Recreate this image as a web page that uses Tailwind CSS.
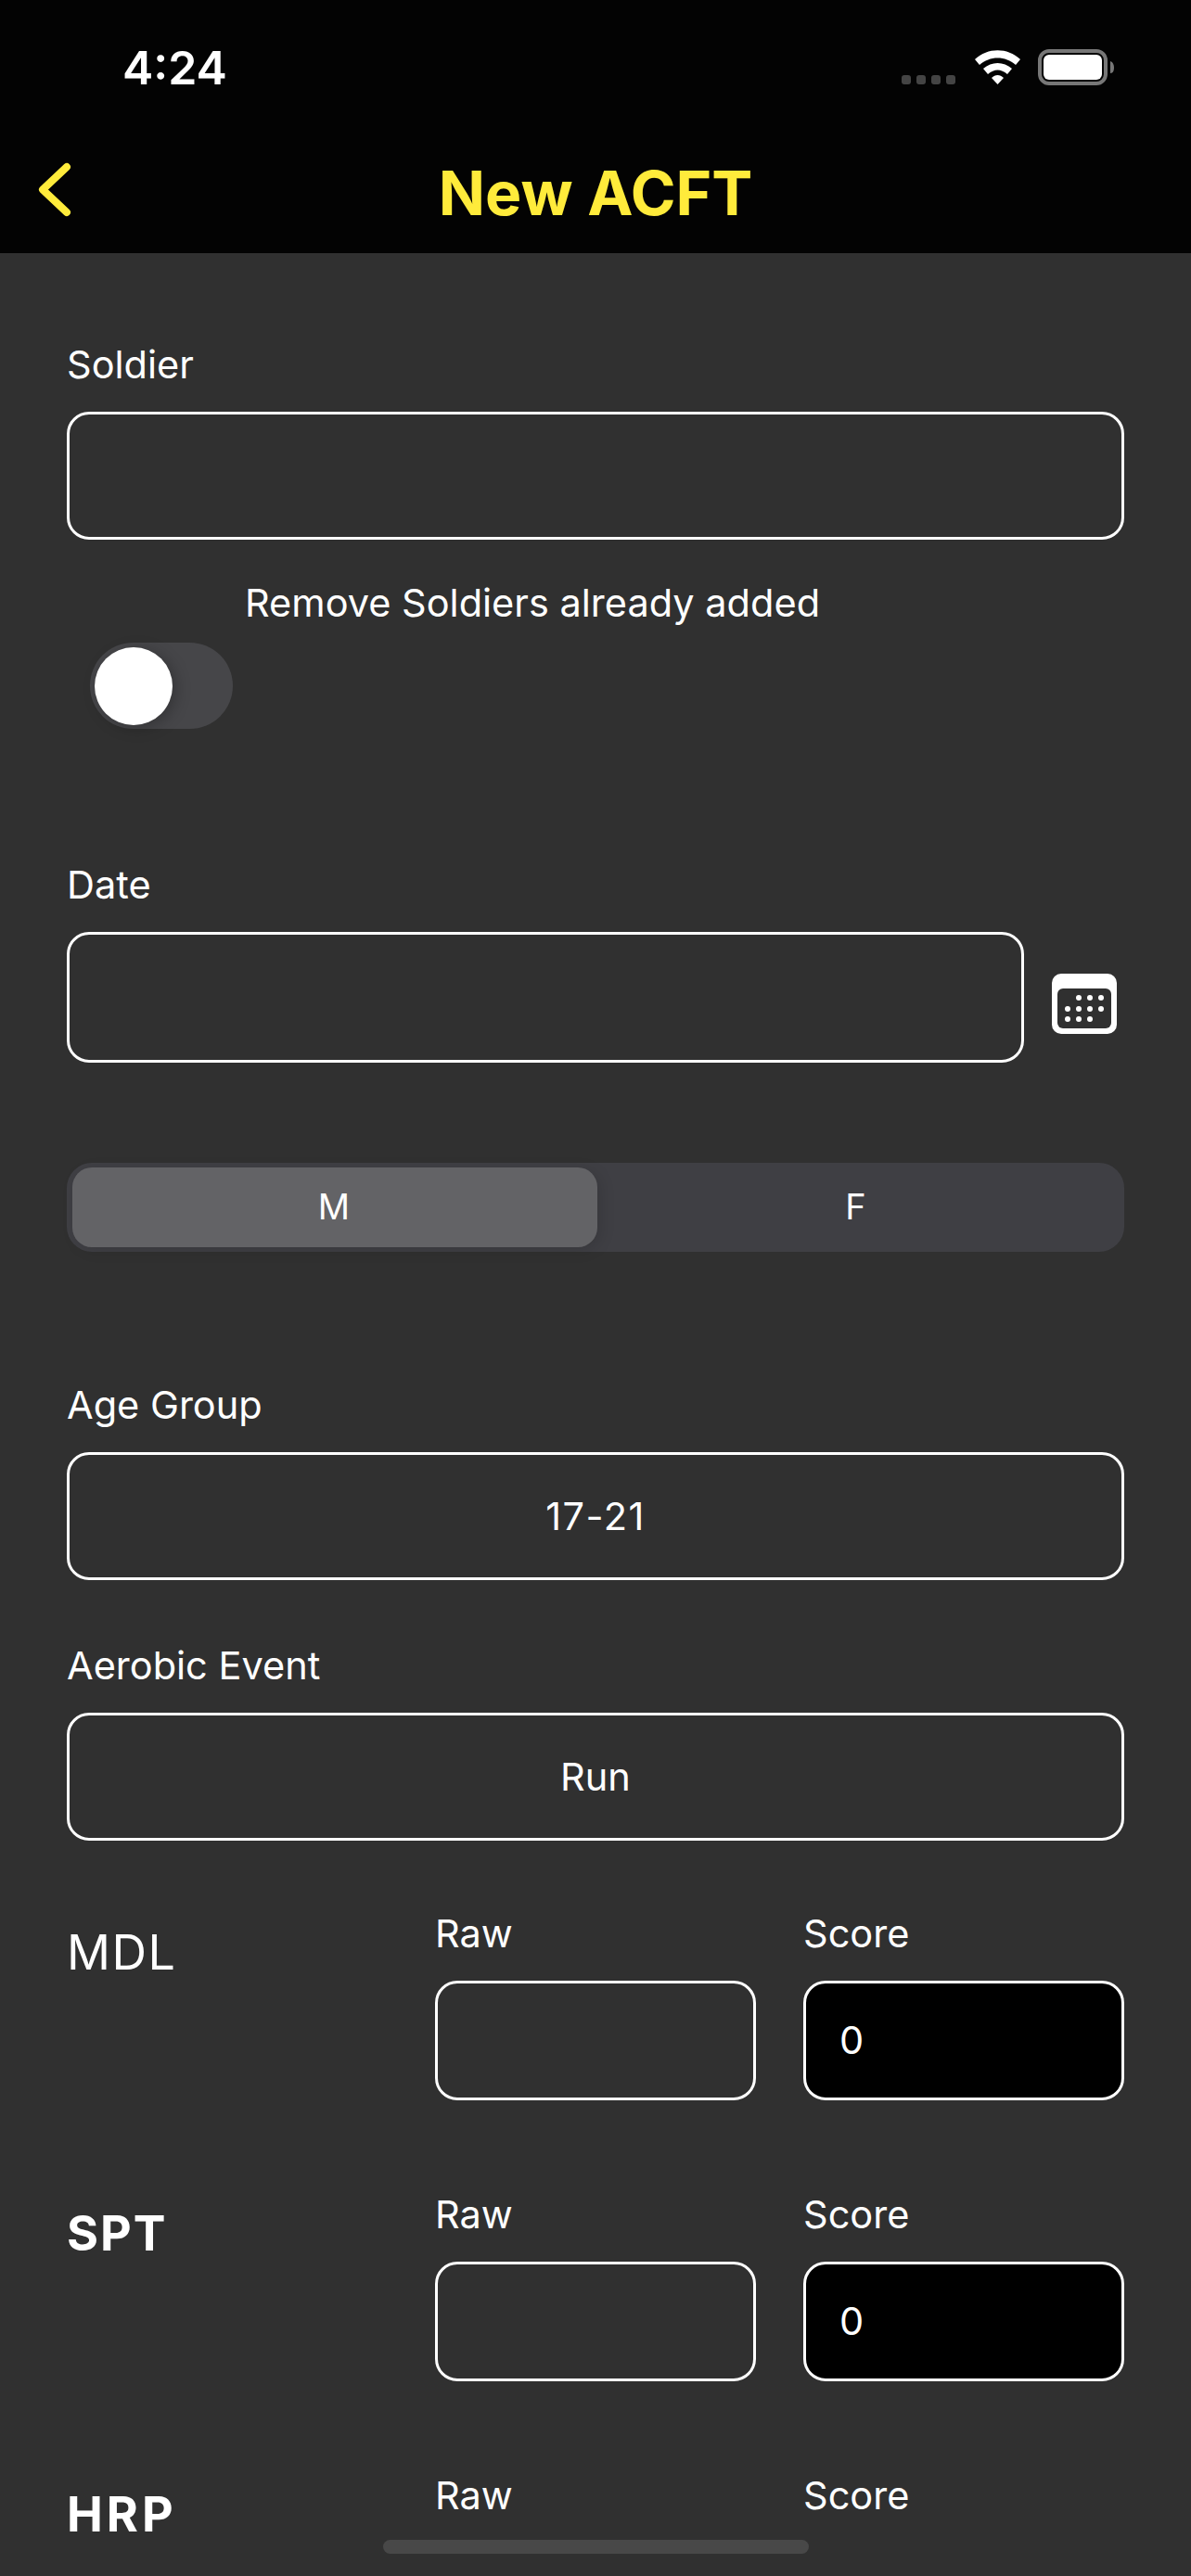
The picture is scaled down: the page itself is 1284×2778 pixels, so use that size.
<!DOCTYPE html>
<html>
<head>
<meta charset="utf-8">
<script src="https://cdn.jsdelivr.net/npm/@tailwindcss/browser@4"></script>
</head>
<body class="m-0 bg-[#303030]">
<div class="relative w-[1284px] h-[2778px] overflow-hidden bg-[#303030] text-white font-['Inter','Liberation_Sans',sans-serif]">
  <header class="h-[273px] bg-[#030303] flex flex-col">
    <div class="h-[146px] flex items-start justify-between pt-[46px] pl-[132px] pr-[82px]">
      <span class="text-[50px] leading-[54px] font-semibold">4:24</span>
      <div class="flex items-start pt-[7px]">
        <svg class="block" width="230" height="40" viewBox="0 0 230 40" fill="none">
          <rect x="0" y="28" width="10" height="10" rx="3" fill="#444"/>
          <rect x="16" y="28" width="10" height="10" rx="3" fill="#444"/>
          <rect x="32" y="28" width="10" height="10" rx="3" fill="#444"/>
          <rect x="48" y="28" width="10" height="10" rx="3" fill="#444"/>
          <path d="M79 11 C93 -2 114 -2 128 11 L123 17 C112 7 95 7 84 17 Z" fill="#fff"/>
          <path d="M88 21 C97 13 110 13 119 21 L114 27 C107 21 100 21 93 27 Z" fill="#fff"/>
          <path d="M97 31 C101 27 106 27 110 31 L103.500 38 Z" fill="#fff"/>
          <rect x="149" y="2" width="71" height="35" rx="10" stroke="#777" stroke-width="4"/>
          <rect x="153" y="6" width="63" height="27" rx="6" fill="#fff"/>
          <path d="M225 13 C228 14 229 17 229 20 C229 23 228 26 225 26 Z" fill="#777"/>
        </svg>
      </div>
    </div>
    <div class="relative flex-1 flex items-start justify-center pt-[24px]">
      <svg class="absolute left-[38px] top-[28px]" width="42" height="62" viewBox="0 0 42 62" fill="none">
        <path d="M34 6 L8 30.500 L34 55" stroke="#ffeb3b" stroke-width="8" stroke-linecap="round" stroke-linejoin="round"/>
      </svg>
      <h1 class="text-[66px] leading-[76px] font-bold text-[#ffeb3b]">New ACFT</h1>
    </div>
  </header>

  <main class="px-[72px] flex flex-col">
    <label class="mt-[92px] h-[56px] text-[41.5px] leading-[56px] block">Soldier</label>
    <div class="mt-[23px] h-[138px] rounded-[24px] border-[3px] border-white"></div>

    <div class="mt-[40px] h-[56px] pl-[192px] text-[41.5px] leading-[56px]">Remove Soldiers already added</div>
    <div class="mt-[15px] ml-[25px] relative w-[154px] h-[93px] rounded-full bg-[#464649]">
      <div class="absolute left-[5px] top-[5px] w-[84px] h-[84px] rounded-full bg-white shadow-[4px_3px_16px_rgba(0,0,0,0.25)]"></div>
    </div>

    <label class="mt-[140px] h-[56px] text-[41.5px] leading-[56px] block">Date</label>
    <div class="mt-[23px] flex items-center">
      <div class="w-[1032px] h-[141px] rounded-[24px] border-[3px] border-white"></div>
      <svg class="ml-[30px] mt-[14px] block" width="70" height="65" viewBox="0 0 70 65" fill="none">
        <rect width="70" height="65" rx="10" fill="#fff"/>
        <rect x="6" y="16" width="58" height="43" rx="6" fill="#303030"/>
        <g fill="#fff">
          <circle cx="29" cy="26" r="3"/><circle cx="41" cy="26" r="3"/><circle cx="53" cy="26" r="3"/>
          <circle cx="17" cy="38" r="3"/><circle cx="29" cy="38" r="3"/><circle cx="41" cy="38" r="3"/><circle cx="53" cy="38" r="3"/>
          <circle cx="17" cy="49" r="3"/><circle cx="29" cy="49" r="3"/><circle cx="41" cy="49" r="3"/>
        </g>
      </svg>
    </div>

    <div class="mt-[108px] h-[96px] rounded-[27px] bg-[#3f3f44] p-[5px] pl-[6px] flex text-[38px]">
      <div class="w-[566px] pr-[2px] pb-[2px] rounded-[21px] bg-[#636366] flex items-center justify-center shadow-[4px_3px_16px_rgba(0,0,0,0.12)]">M</div>
      <div class="flex-1 pr-[6px] pb-[2px] flex items-center justify-center">F</div>
    </div>

    <label class="mt-[137px] h-[56px] text-[41.5px] leading-[56px] block">Age Group</label>
    <div class="mt-[23px] h-[138px] rounded-[24px] border-[3px] border-white flex items-center justify-center text-[41.5px] tracking-[1.5px]">17-21</div>

    <label class="mt-[64px] h-[56px] text-[41.5px] leading-[56px] block">Aerobic Event</label>
    <div class="mt-[23px] h-[138px] rounded-[24px] border-[3px] border-white flex items-center justify-center text-[41.5px]">Run</div>

    <section class="mt-[72px] h-[303px] flex">
      <div class="w-[397px] pt-[19px] text-[52px] leading-[60px] font-normal tracking-[1.5px]">MDL</div>
      <div class="w-[346px]">
        <div class="h-[56px] text-[41.5px] leading-[56px]">Raw</div>
        <div class="mt-[23px] h-[129px] rounded-[24px] border-[3px] border-white"></div>
      </div>
      <div class="ml-[51px] w-[346px]">
        <div class="h-[56px] text-[41.5px] leading-[56px]">Score</div>
        <div class="mt-[23px] h-[129px] rounded-[24px] border-[3px] border-white bg-black flex items-center pl-[36px] text-[41.5px]">0</div>
      </div>
    </section>
    <section class="h-[303px] flex">
      <div class="w-[397px] pt-[19px] text-[52px] leading-[60px] font-bold tracking-[2px]">SPT</div>
      <div class="w-[346px]">
        <div class="h-[56px] text-[41.5px] leading-[56px]">Raw</div>
        <div class="mt-[23px] h-[129px] rounded-[24px] border-[3px] border-white"></div>
      </div>
      <div class="ml-[51px] w-[346px]">
        <div class="h-[56px] text-[41.5px] leading-[56px]">Score</div>
        <div class="mt-[23px] h-[129px] rounded-[24px] border-[3px] border-white bg-black flex items-center pl-[36px] text-[41.5px]">0</div>
      </div>
    </section>
    <section class="h-[303px] flex">
      <div class="w-[397px] pt-[19px] text-[52px] leading-[60px] font-bold tracking-[4px]">HRP</div>
      <div class="w-[346px]">
        <div class="h-[56px] text-[41.5px] leading-[56px]">Raw</div>
      </div>
      <div class="ml-[51px] w-[346px]">
        <div class="h-[56px] text-[41.5px] leading-[56px]">Score</div>
      </div>
    </section>
  </main>

  <div class="absolute left-[413px] top-[2739px] w-[459px] h-[15px] rounded-full bg-[#484848]"></div>
</div>
</body>
</html>
